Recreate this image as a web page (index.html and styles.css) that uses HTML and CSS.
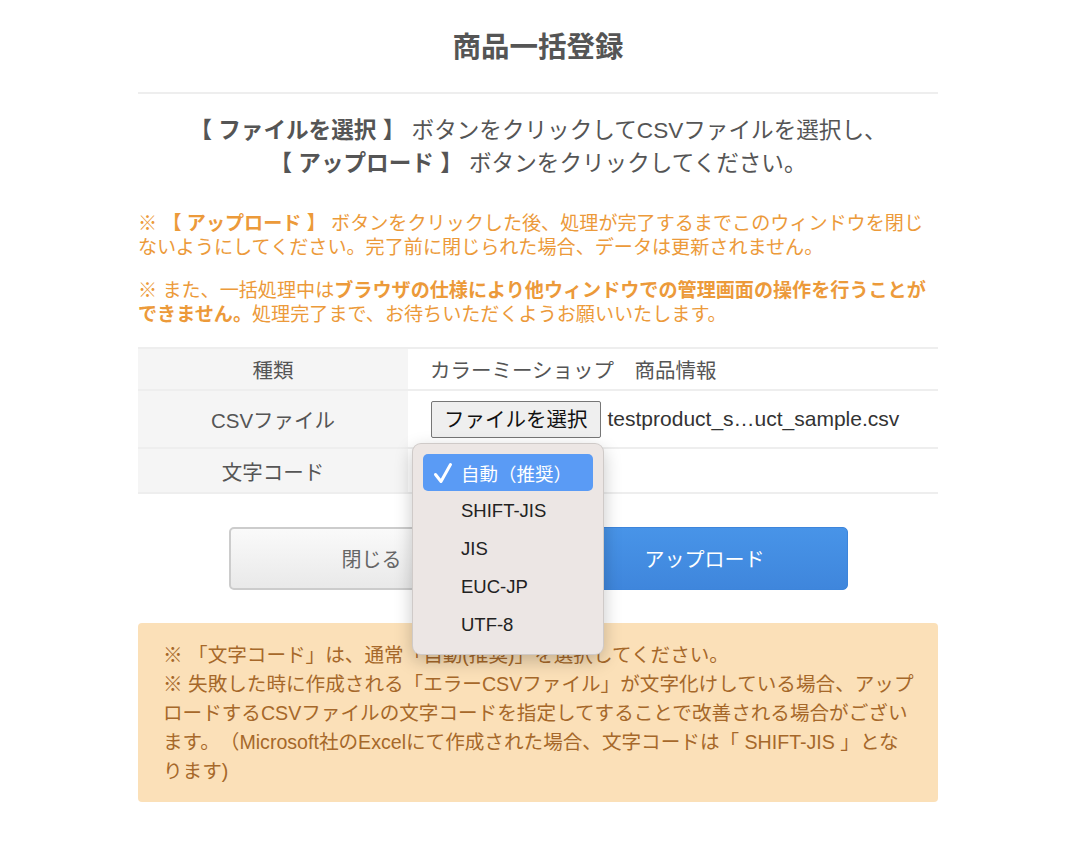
FILE: index.html
```html
<!DOCTYPE html>
<html lang="ja">
<head>
<meta charset="utf-8">
<title>商品一括登録</title>
<link rel="stylesheet" href="styles.css">
</head>
<body>
<div class="page">
  <h1 class="title">商品一括登録</h1>
  <hr class="rule">
  <p class="lead"><b>【 ファイルを選択 】</b> ボタンをクリックしてCSVファイルを選択し、<br><b>【 アップロード 】</b> ボタンをクリックしてください。</p>
  <p class="warn warn-first">※ <b>【 アップロード 】</b> ボタンをクリックした後、処理が完了するまでこのウィンドウを閉じないようにしてください。完了前に閉じられた場合、データは更新されません。</p>
  <p class="warn">※ また、一括処理中は<b>ブラウザの仕様により他ウィンドウでの管理画面の操作を行うことができません。</b>処理完了まで、お待ちいただくようお願いいたします。</p>

  <div class="form">
    <div class="row row-kind">
      <div class="label">種類</div>
      <div class="value">カラーミーショップ　商品情報</div>
    </div>
    <div class="row row-file">
      <div class="label">CSVファイル</div>
      <div class="value"><span class="file-btn">ファイルを選択</span><span class="file-name">testproduct_s…uct_sample.csv</span></div>
    </div>
    <div class="row row-code">
      <div class="label">文字コード</div>
      <div class="value value-code">
        <span class="select-slot"></span>
        <ul class="menu">
          <li class="menu-item selected"><svg class="check" viewBox="0 0 20 22" width="20" height="22"><path d="M2.5 12.5 L8 19.5 L17.5 2.5" fill="none" stroke="#fff" stroke-width="3" stroke-linecap="round" stroke-linejoin="round"/></svg>自動（推奨）</li>
          <li class="menu-item">SHIFT-JIS</li>
          <li class="menu-item">JIS</li>
          <li class="menu-item">EUC-JP</li>
          <li class="menu-item">UTF-8</li>
        </ul>
      </div>
    </div>
  </div>

  <div class="actions">
    <button class="btn btn-close">閉じる</button>
    <button class="btn btn-upload">アップロード</button>
  </div>

  <div class="note">
    <p>※ 「文字コード」は、通常「自動(推奨)」を選択してください。</p>
    <p>※ 失敗した時に作成される「エラーCSVファイル」が文字化けしている場合、アップロードするCSVファイルの文字コードを指定してすることで改善される場合がございます。（Microsoft社のExcelにて作成された場合、文字コードは「 SHIFT-JIS 」となります)</p>
  </div>
</div>
</body>
</html>
```

FILE: styles.css
```css
* { box-sizing: border-box; }
html, body { margin: 0; padding: 0; background: #fff; }
body {
  padding-left: 8px;
  font-family: "Liberation Sans", "Noto Sans CJK JP", sans-serif;
  color: #555;
  text-spacing-trim: space-all;
}
.page {
  width: 800px;
  margin: 0 auto;
}
.title {
  margin: 0;
  padding-top: 27px;
  font-size: 28.5px;
  line-height: 40px;
  font-weight: bold;
  text-align: center;
  color: #555;
}
.rule {
  margin: 25px 0 0;
  border: 0;
  height: 2px;
  background: #eeeeee;
}
.lead {
  margin: 20px 0 0;
  font-size: 22.6px;
  line-height: 33px;
  text-align: center;
  color: #555;
}
.lead b { font-weight: bold; }
.warn {
  margin: 19px 0 0;
  font-size: 19.1px;
  line-height: 24px;
  color: #ec9a3a;
}
.warn-first { margin-top: 32px; }
.warn b { font-weight: bold; }

.form {
  margin-top: 20px;
  border-top: 2px solid #eeeeee;
  font-size: 20.5px;
  color: #555;
}
.row {
  display: grid;
  grid-template-columns: 270px 1fr;
  border-bottom: 2px solid #eeeeee;
}
.label {
  background: #f5f5f5;
  text-align: center;
  display: flex;
  align-items: center;
  justify-content: center;
}
.value {
  display: flex;
  align-items: center;
  padding-left: 22px;
}
.row-kind { height: 42px; }
.row-file { height: 58px; }
.row-code { height: 45px; }
.value-code { position: relative; }
.file-btn {
  display: inline-block;
  height: 37px;
  line-height: 35px;
  padding: 0 12px;
  border: 1px solid #767676;
  border-radius: 2px;
  background: #efefef;
  color: #111;
  margin-left: 1px;
  font-size: 20.5px;
}
.file-name {
  margin-left: 7px;
  color: #333;
  font-size: 21px;
}
.menu {
  position: absolute;
  left: 4px;
  top: -6px;
  width: 192px;
  margin: 0;
  padding: 10px 10px;
  list-style: none;
  background: #ece6e4;
  border: 1px solid rgba(0,0,0,0.12);
  border-radius: 9px;
  box-shadow: 0 6px 18px rgba(0,0,0,0.22);
  z-index: 10;
}
.menu-item {
  height: 38px;
  display: flex;
  align-items: center;
  padding-left: 38px;
  font-size: 18.5px;
  color: #222;
  position: relative;
  border-radius: 5px;
}
.menu-item.selected {
  background: #5a9bf5;
  color: #fff;
  height: 37px;
  margin-bottom: 1px;
}
.check {
  position: absolute;
  left: 10px;
  top: 8px;
}

.actions {
  margin-top: 33px;
  display: flex;
  justify-content: center;
  gap: 47px;
}
.btn {
  width: 286px;
  height: 63px;
  border-radius: 5px;
  font-family: "Liberation Sans", "Noto Sans CJK JP", sans-serif;
  font-size: 20px;
  cursor: pointer;
}
.btn-close {
  border: 2px solid #cccccc;
  background: linear-gradient(#fafafa, #e9e9e9);
  color: #666;
}
.btn-upload {
  border: 1px solid #3d85db;
  background: linear-gradient(#4894e8, #3f86dc);
  color: #fff;
}

.note {
  margin-top: 33px;
  background: #fbe0b8;
  border-radius: 4px;
  padding: 18px 20px 16px 25px;
  color: #a6682a;
  font-size: 19.6px;
  line-height: 29px;
}
.note p { margin: 0; }
```
